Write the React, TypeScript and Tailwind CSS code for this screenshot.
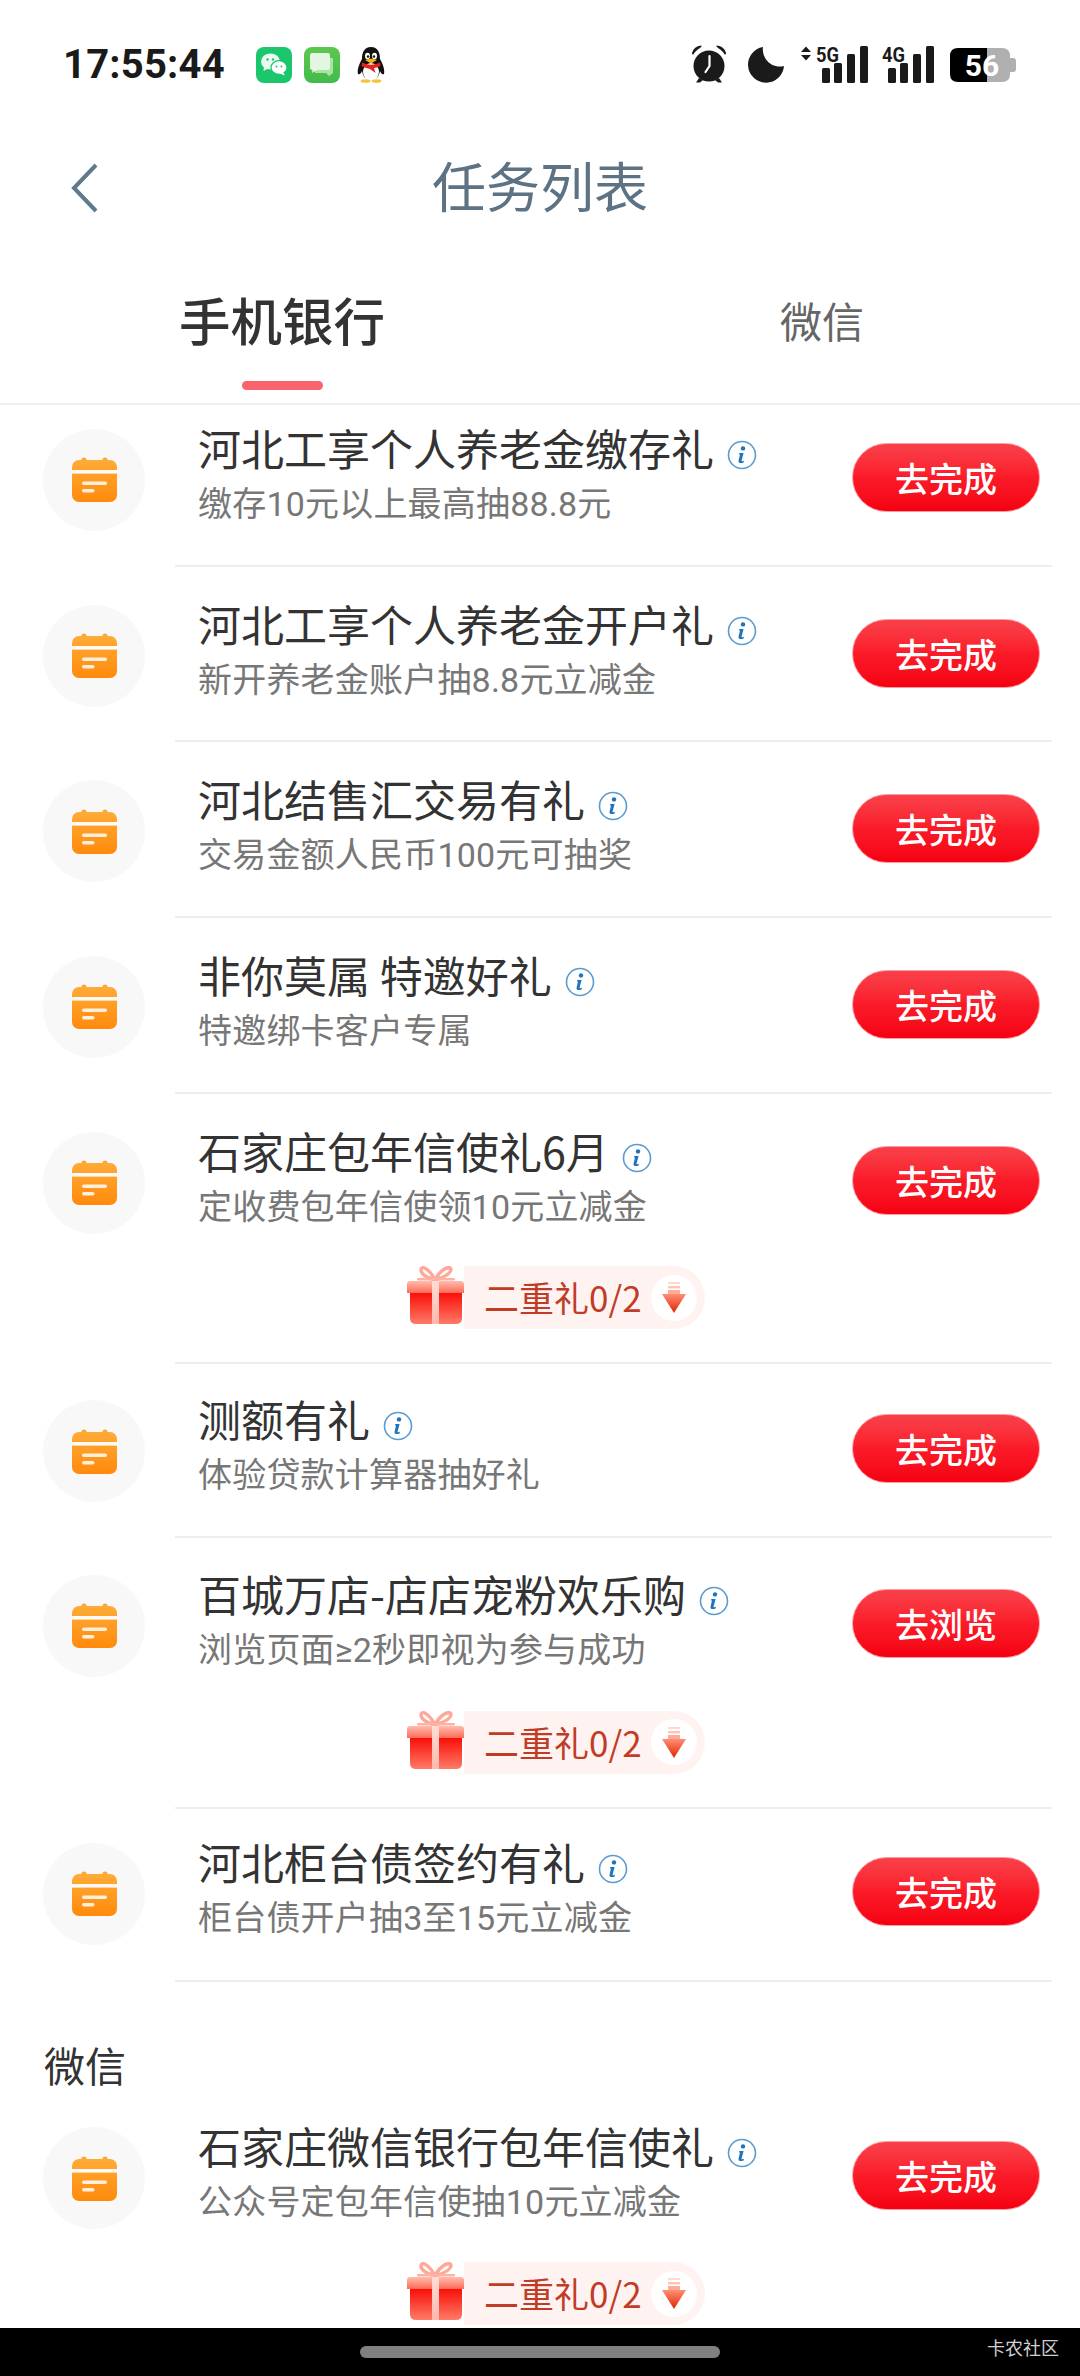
import React from "react";

const cjk = "font-['Noto_Sans_CJK_SC','Noto_Sans',sans-serif]";

type Task = { title: string; sub: string; action?: string; gift?: boolean; lift?: 1 | 2 | 3 };

const tasks: Task[] = [
  { title: "河北工享个人养老金缴存礼", sub: "缴存10元以上最高抽88.8元" },
  { title: "河北工享个人养老金开户礼", sub: "新开养老金账户抽8.8元立减金" },
  { title: "河北结售汇交易有礼", sub: "交易金额人民币100元可抽奖" },
  { title: "非你莫属 特邀好礼", sub: "特邀绑卡客户专属" },
  { title: "石家庄包年信使礼6月", sub: "定收费包年信使领10元立减金", gift: true },
  { title: "测额有礼", sub: "体验贷款计算器抽好礼", lift: 1 },
  { title: "百城万店-店店宠粉欢乐购", sub: "浏览页面≥2秒即视为参与成功", action: "去浏览", gift: true, lift: 3 },
  { title: "河北柜台债签约有礼", sub: "柜台债开户抽3至15元立减金", lift: 2 },
];

function CalendarIcon() {
  return (
    <svg width="45" height="45" viewBox="0 0 45 45">
      <defs>
        <linearGradient id="cal" x1="0" y1="0" x2="0" y2="1">
          <stop offset="0" stopColor="#ffab38" />
          <stop offset="1" stopColor="#ff8a0c" />
        </linearGradient>
      </defs>
      <circle cx="12" cy="3" r="2.6" fill="#ffa62e" />
      <circle cx="33" cy="3" r="2.6" fill="#ffa62e" />
      <rect x="0" y="3" width="45" height="42" rx="7" fill="url(#cal)" />
      <rect x="0" y="13" width="45" height="3.6" fill="#fff" fillOpacity="0.95" />
      <rect x="10" y="24.5" width="25" height="3.4" rx="1.7" fill="#fff" fillOpacity="0.85" />
      <rect x="10" y="32" width="12.5" height="3.4" rx="1.7" fill="#fff" fillOpacity="0.85" />
    </svg>
  );
}

function InfoIcon() {
  return (
    <svg width="30" height="30" viewBox="0 0 30 30" className="ml-[13px] mt-[16px] shrink-0">
      <circle cx="15" cy="15" r="13.5" fill="#fff" stroke="#5b9bd0" strokeWidth="1.6" />
      <circle cx="16" cy="8.4" r="2.2" fill="#1f74bd" />
      <path d="M12.3 13 H16.6 L14.6 20.4 C14.4 21.3 15 21.6 16.9 20.8 L16.6 22.4 C13.6 23.6 11 23.2 11.6 20.4 L13 14.6 H12 Z" fill="#1f74bd" />
    </svg>
  );
}

function GiftIcon() {
  return (
    <svg width="57" height="58" viewBox="0 0 57 58" className="-mt-[1px] shrink-0 self-start">
      <defs>
        <linearGradient id="gbody" x1="0" y1="0" x2="0" y2="1">
          <stop offset="0" stopColor="#f90f08" />
          <stop offset="1" stopColor="#ff7b68" />
        </linearGradient>
        <linearGradient id="glid" x1="0" y1="0" x2="0" y2="1">
          <stop offset="0" stopColor="#ffbcae" />
          <stop offset="1" stopColor="#ff6a58" />
        </linearGradient>
        <linearGradient id="gband" x1="0" y1="0" x2="0" y2="1">
          <stop offset="0" stopColor="#ffdcd5" />
          <stop offset="1" stopColor="#ffb9ad" />
        </linearGradient>
      </defs>
      <path d="M28 14 C22 2 14 -1 14 4 C14 9 21 12 28 14 C35 12 43 9 44 4 C44 -1 34 2 28 14 Z" fill="none" stroke="#ffa798" strokeWidth="3.4" />
      <rect x="10" y="12" width="38" height="2.6" rx="1.3" fill="#ffb2a4" />
      <path d="M3 27 H55 V52 Q55 58 49 58 H9 Q3 58 3 52 Z" fill="url(#gbody)" />
      <path d="M0 18 Q0 15 3 15 H54 Q57 15 57 18 V27 H0 Z" fill="url(#glid)" />
      <rect x="25" y="15" width="7" height="43" fill="url(#gband)" />
    </svg>
  );
}

function ArrowIcon() {
  return (
    <svg width="24" height="31" viewBox="0 0 24 31">
      <defs>
        <linearGradient id="arr" x1="0" y1="0" x2="0" y2="1">
          <stop offset="0" stopColor="#ff8f76" />
          <stop offset="1" stopColor="#de2600" />
        </linearGradient>
      </defs>
      <rect x="6" y="0" width="12" height="2" fill="#ffd9cf" />
      <rect x="6" y="4" width="12" height="2.4" fill="#ffc4b5" />
      <rect x="6" y="8" width="12" height="4" fill="#ffab98" />
      <path d="M0 12 H24 L12 31 Z" fill="url(#arr)" />
    </svg>
  );
}

function GiftBadge() {
  return (
    <div className="flex h-[95px] items-start pl-[407px]">
      <GiftIcon />
      <div className="-mt-[1px] flex h-[63px] items-center rounded-r-full bg-[#fff3f1] pl-[20px] pr-[8px] text-[35px] leading-[63px] text-[#c13c26]">
        <span className="-mt-[2px]">二重礼0/2</span>
        <span className="ml-[9px] flex h-[46px] w-[46px] items-center justify-center rounded-full bg-white">
          <ArrowIcon />
        </span>
      </div>
    </div>
  );
}

function Row({ task }: { task: Task }) {
  const shift =
    task.lift === 1
      ? "-mb-[2px] pb-[8px]"
      : task.lift === 2
        ? "-mb-[3px] pb-[12px]"
        : task.lift === 3
          ? "pb-[6px]"
          : "pb-[4px]";
  return (
    <div>
      <div className={`flex h-[173.7px] items-center pl-[43px] pr-[40px] ${shift}`}>
        <div className="mt-[8px] flex h-[102px] w-[102px] shrink-0 items-center justify-center rounded-full bg-[#f8f8f8]">
          <CalendarIcon />
        </div>
        <div className="-mt-[2px] ml-[53px] min-w-0 flex-1">
          <div className="flex h-[56px] items-center text-[43px] leading-[56px] text-[#333333]">
            <span className="whitespace-pre">{task.title}</span>
            <InfoIcon />
          </div>
          <div className="h-[56px] font-['Roboto','Noto_Sans_CJK_SC',sans-serif] text-[34px] leading-[59px] tracking-[0.2px] text-[#777777]">{task.sub}</div>
        </div>
        <div className="mt-[3px] flex h-[69px] w-[188px] shrink-0 items-center justify-center rounded-full border border-[#ff9aa0] bg-gradient-to-b from-[#f8404a] via-[#fb1a28] to-[#f50010] text-[34px] font-medium text-white">
          {task.action ?? "去完成"}
        </div>
      </div>
      {task.gift ? <GiftBadge /> : null}
    </div>
  );
}

function Divider() {
  return <div className="ml-[175px] mr-[28px] h-[2px] bg-[#eeeeee]" />;
}

function Signal({ label, arrows }: { label: string; arrows?: boolean }) {
  return (
    <svg width="66" height="38" viewBox="0 0 66 38" className="block shrink-0 overflow-visible">
      {arrows ? (
        <g fill="#1a1a1a">
          <path d="M-15 6 L-10 0.5 L-5 6 Z" />
          <path d="M-15 9 L-5 9 L-10 14.5 Z" />
        </g>
      ) : null}
      <text x="0" y="16" fontFamily="Roboto, sans-serif" fontWeight="700" fontSize="20" textLength="23" lengthAdjust="spacingAndGlyphs" fill="#1a1a1a">
        {label}
      </text>
      <rect x="6" y="22" width="8" height="15" rx="1.5" fill="#1a1a1a" />
      <rect x="18" y="17" width="8" height="20" rx="1.5" fill="#1a1a1a" />
      <rect x="31" y="8" width="8" height="29" rx="1.5" fill="#1a1a1a" />
      <rect x="44" y="0" width="8" height="37" rx="1.5" fill="#1a1a1a" />
    </svg>
  );
}

function StatusBar() {
  return (
    <div className="flex h-[130px] shrink-0 items-center pl-[63px] pr-[64px]">
      <span className="w-[193px] shrink-0 font-['Roboto',sans-serif] text-[40px] font-bold leading-none tracking-[0.2px] text-[#1a1a1a]">17:55:44</span>
      <svg width="36" height="36" viewBox="0 0 36 36" className="shrink-0">
        <rect width="36" height="36" rx="8" fill="#1cc66d" />
        <ellipse cx="14.5" cy="14.5" rx="9.5" ry="8" fill="#e9fbf0" />
        <path d="M8 19 L7.5 24 L13 21 Z" fill="#e9fbf0" />
        <ellipse cx="23" cy="20.5" rx="8" ry="6.8" fill="#fff" stroke="#1cc66d" strokeWidth="1.2" />
        <path d="M27 25 L29 28.5 L23.5 26.5 Z" fill="#fff" />
        <circle cx="11.5" cy="12.5" r="1.2" fill="#1cc66d" />
        <circle cx="17" cy="12.5" r="1.2" fill="#1cc66d" />
        <circle cx="20.5" cy="19.5" r="1" fill="#1cc66d" />
        <circle cx="25.5" cy="19.5" r="1" fill="#1cc66d" />
      </svg>
      <svg width="36" height="36" viewBox="0 0 36 36" className="ml-[12px] shrink-0">
        <defs>
          <linearGradient id="msg" x1="0" y1="0" x2="0" y2="1">
            <stop offset="0" stopColor="#5cc84f" />
            <stop offset="1" stopColor="#42bb4b" />
          </linearGradient>
        </defs>
        <rect width="36" height="36" rx="8" fill="url(#msg)" />
        <path d="M11 11 H29 V26 L25 29 L22 26 H11 Z" fill="#a9e3a6" />
        <path d="M6 8 Q6 6 8 6 H24 Q26 6 26 8 V21 Q26 23 24 23 H13 L8 26 L8.5 23 Q6 23 6 21 Z" fill="#e3f6e1" />
      </svg>
      <svg width="28" height="36" viewBox="0 0 28 36" className="ml-[17px] shrink-0">
        <path d="M14 0 C7 0 5 6 5 12 C2 17 0 23 1 27 C3 28 4 26 5 24 C6 30 9 33 14 33 C19 33 22 30 23 24 C24 26 25 28 27 27 C28 23 26 17 23 12 C23 6 21 0 14 0 Z" fill="#111" />
        <ellipse cx="14" cy="25" rx="8" ry="9" fill="#fff" />
        <ellipse cx="10.5" cy="9" rx="2.5" ry="3.2" fill="#fff" />
        <ellipse cx="17.5" cy="9" rx="2.5" ry="3.2" fill="#fff" />
        <circle cx="11" cy="9.5" r="1.2" fill="#111" />
        <circle cx="17" cy="9.5" r="1.2" fill="#111" />
        <path d="M8 13 Q14 10.5 20 13 L14 16.5 Z" fill="#f8b312" />
        <path d="M5 15.5 Q14 20 23 15.5 L23.5 19 Q19 21 17 21 L18.5 26 L13 22 Q8 21 4.5 19 Z" fill="#e3241c" />
        <ellipse cx="8.5" cy="34" rx="5" ry="1.8" fill="#f8c33c" />
        <ellipse cx="19.5" cy="34" rx="5" ry="1.8" fill="#f8c33c" />
      </svg>
      <div className="flex-1" />
      <svg width="36" height="38" viewBox="0 0 36 38" className="-mt-[2px] shrink-0">
        <circle cx="18" cy="21" r="15.5" fill="#1a1a1a" />
        <path d="M1 8 Q3 1 10 0.5 Q11.5 1 9 3 Q4 6 2.5 9.5 Q1 10 1 8 Z" fill="#1a1a1a" />
        <path d="M35 8 Q33 1 26 0.5 Q24.5 1 27 3 Q32 6 33.5 9.5 Q35 10 35 8 Z" fill="#1a1a1a" />
        <path d="M8 33 L5 37.5 L9 37.5 L12 35 Z M28 33 L31 37.5 L27 37.5 L24 35 Z" fill="#1a1a1a" />
        <path d="M18.5 11 V21 L14.5 27" fill="none" stroke="#fff" strokeWidth="2.2" strokeLinecap="round" />
      </svg>
      <svg width="37" height="37" viewBox="0 0 37 37" className="-mt-[2px] ml-[20px] shrink-0">
        <path d="M16 1 A18 18 0 1 0 37 20 A17 17 0 0 1 16 1 Z" fill="#1a1a1a" />
      </svg>
      <span className="ml-[32px] block"><Signal label="5G" arrows /></span>
      <Signal label="4G" />
      <svg width="66" height="34" viewBox="0 0 66 34" className="ml-[2px] shrink-0">
        <path d="M37 0 H52 Q60 0 60 8 V10 H63 Q66 10 66 13 V21 Q66 24 63 24 H60 V26 Q60 34 52 34 H37 Z" fill="#b0b0b0" />
        <path d="M8 0 H37 V34 H8 Q0 34 0 26 V8 Q0 0 8 0 Z" fill="#000" />
        <text x="32" y="27.5" textAnchor="middle" fontFamily="Roboto, sans-serif" fontWeight="700" fontSize="30" fill="#fff">56</text>
      </svg>
    </div>
  );
}

export default function App() {
  return (
    <div className={`flex h-[2376px] w-[1080px] flex-col overflow-hidden bg-white ${cjk}`}>
      <StatusBar />

      <div className="grid h-[115px] shrink-0 grid-cols-[1fr_auto_1fr] items-center">
        <div className="pl-[71px]">
          <svg width="27" height="50" viewBox="0 0 27 50" className="block">
            <path d="M25 2 L3 25 L25 48" fill="none" stroke="#5f7a8c" strokeWidth="4" />
          </svg>
        </div>
        <div className="-mt-[5px] text-[54px] leading-[70px] text-[#5d7283]">任务列表</div>
        <div />
      </div>

      <div className="box-border grid h-[160px] shrink-0 grid-cols-[540px_540px] border-b-2 border-[#f0f0f0] pl-[12px] pt-[44px]">
        <div className="flex flex-col items-center">
          <div className="text-[51.5px] font-medium leading-[60px] text-[#333333]">手机银行</div>
          <div className="mt-[32px] h-[9px] w-[81px] rounded-full bg-[#f9636c]" />
        </div>
        <div className="mt-[1px] text-center text-[42px] leading-[60px] text-[#666666]">微信</div>
      </div>

      <div className="min-h-0 flex-1 overflow-hidden">
        <div className="-mt-[14px]">
          {tasks.map((t) => (
            <div key={t.title}>
              <Row task={t} />
              <Divider />
            </div>
          ))}
          <div className="flex h-[108px] items-end px-[44px] pb-[1px] text-[41px] leading-[50px] text-[#333333]">
            <span>微信</span>
          </div>
          <Row task={{ title: "石家庄微信银行包年信使礼", sub: "公众号定包年信使抽10元立减金", gift: true }} />
        </div>
      </div>

      <div className="relative flex h-[48px] shrink-0 items-center justify-center bg-black">
        <div className="h-[12px] w-[360px] rounded-full bg-[#808080]" />
        <span className="absolute right-[21px] top-[8px] text-[18px] leading-[22px] text-[#d0d0d0]">卡农社区</span>
      </div>
    </div>
  );
}
